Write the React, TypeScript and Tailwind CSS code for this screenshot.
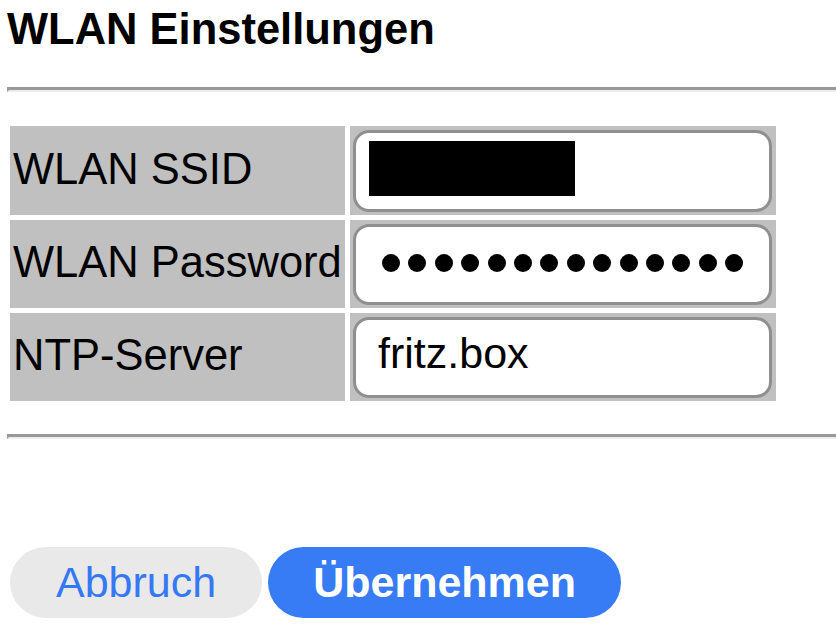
import React from "react";

function Rule({ className }: { className?: string }) {
  return (
    <div
      className={
        "ml-[7px] h-[5px] border-t-[3px] border-l-[2px] border-b-[2px] border-t-[#989898] border-l-[#989898] border-b-[#ececec] " +
        (className ?? "")
      }
    />
  );
}

function FieldBox({ children }: { children: React.ReactNode }) {
  return (
    <div className="bg-[#c0c0c0] pl-[3px] pr-[4px] pt-[4px] pb-[3px]">
      <div className="flex h-full items-center rounded-[16px] border-[3px] border-[#8f8f8f] bg-white">
        {children}
      </div>
    </div>
  );
}

function Label({ text }: { text: string }) {
  return (
    <div className="flex items-center bg-[#c0c0c0] pl-[3px] pb-[2px] text-[43.5px] leading-none whitespace-nowrap">
      {text}
    </div>
  );
}

export default function App() {
  return (
    <div className="h-[628px] w-[836px] overflow-hidden bg-white font-['Liberation_Sans',Arial,sans-serif] text-black">
      <h1 className="pl-[7px] pt-[5px] text-[43.5px] font-bold leading-[48px]">WLAN Einstellungen</h1>

      <Rule className="mt-[34px]" />

      <div className="ml-[10px] mt-[34px] grid grid-cols-[335px_426px] grid-rows-[89px_88px_88px] gap-[5px]">
        <Label text="WLAN SSID" />
        <FieldBox>
          {/* SSID ist geschwärzt */}
          <div className="ml-[13px] mb-[5px] h-[55px] w-[206px] bg-black" />
        </FieldBox>

        <Label text="WLAN Password" />
        <FieldBox>
          <div className="ml-[26px] mb-[4px] flex gap-[8.4px]">
            {Array.from({ length: 14 }).map((_, i) => (
              <span key={i} className="block h-[18px] w-[18px] rounded-full bg-black" />
            ))}
          </div>
        </FieldBox>

        <Label text="NTP-Server" />
        <FieldBox>
          <span className="pl-[22px] pb-[9px] text-[43px] leading-none">fritz.box</span>
        </FieldBox>
      </div>

      <Rule className="mt-[33px]" />

      <div className="ml-[10px] mt-[108px] flex gap-[6px]">
        <button
          type="button"
          className="flex h-[71px] items-center rounded-full bg-[#e9e9e9] px-[46px] text-[43px] leading-none text-[#3478f6]"
        >
          Abbruch
        </button>
        <button
          type="button"
          className="flex h-[71px] items-center rounded-full bg-[#377bf5] px-[45px] text-[43px] font-bold leading-none text-white"
        >
          Übernehmen
        </button>
      </div>
    </div>
  );
}
